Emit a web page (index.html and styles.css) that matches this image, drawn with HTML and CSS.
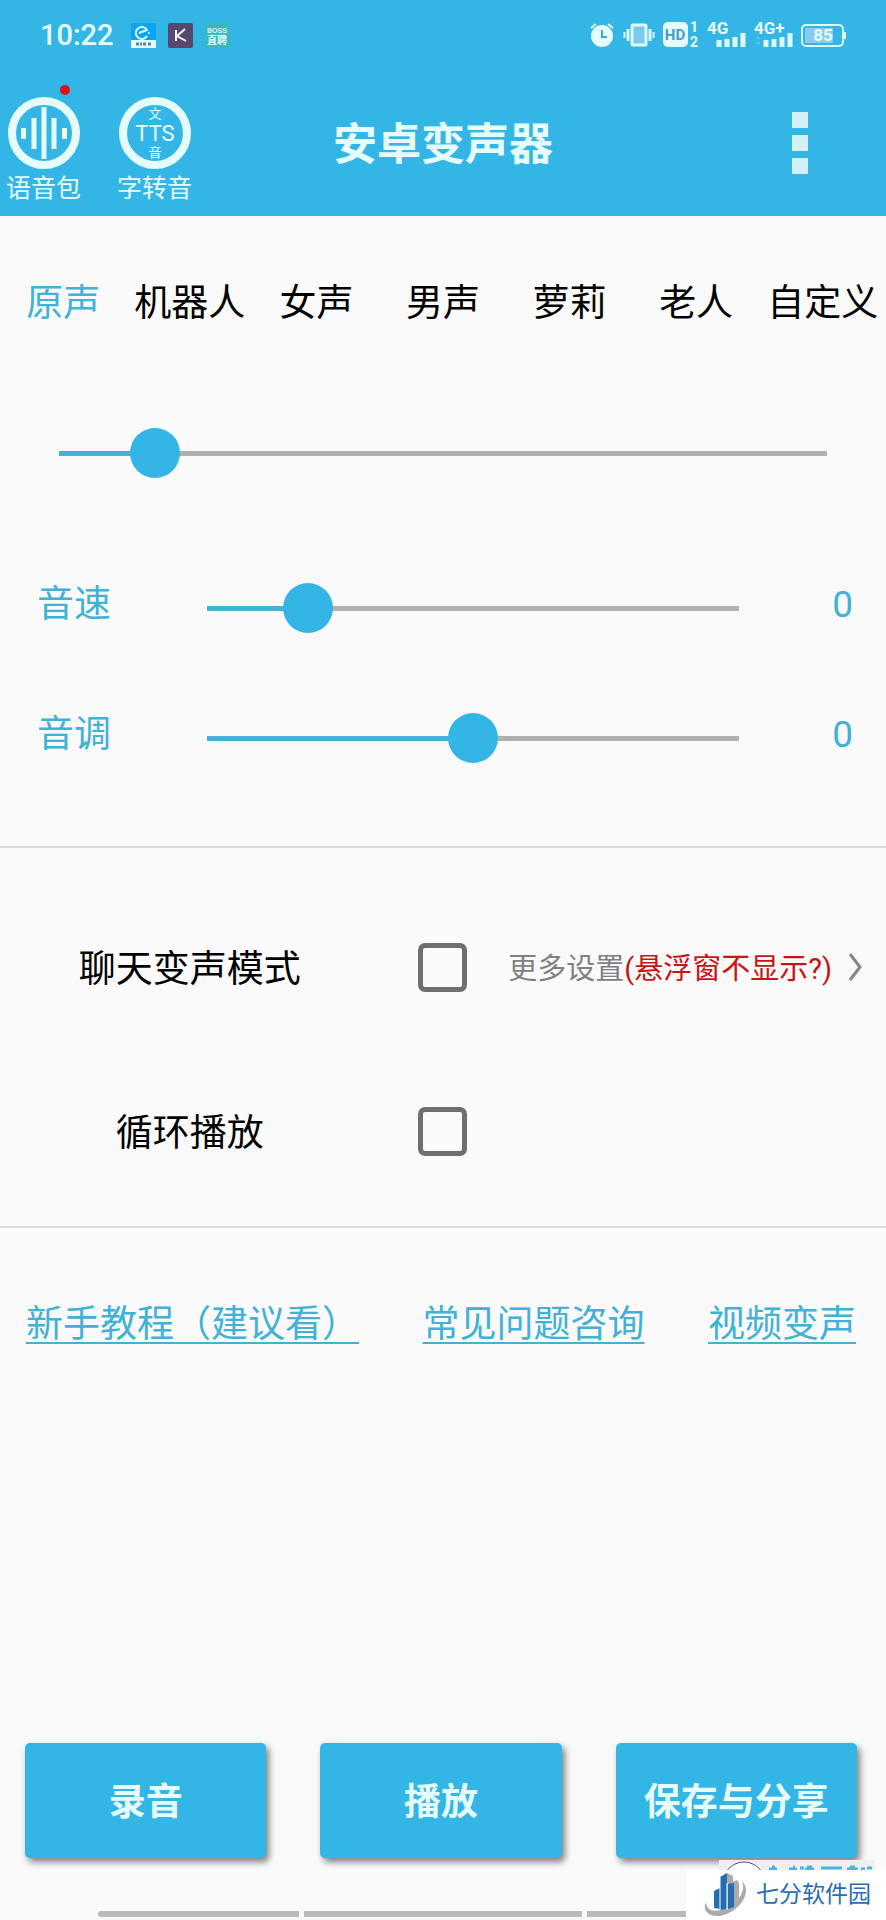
FILE: index.html
```html
<!DOCTYPE html>
<html lang="zh-CN">
<head>
    <meta charset="UTF-8">
    <title>安卓变声器</title>
    <meta name="viewport" content="width=device-width, initial-scale=1.0">
    <link rel="stylesheet" href="styles.css">
</head>
<body>
    <header class="header">
        <div class="status-bar">
            <span class="clock">10:22</span>
            <div class="status-apps">
                <svg width="25" height="25" viewBox="0 0 25 25">
                    <rect width="25" height="18" rx="2" fill="#08a5f5"/>
                    <rect y="17" width="25" height="8" rx="1" fill="#e4fbff"/>
                    <path d="M8 10 L16 7 A6 6 0 1 0 16 13" fill="none" stroke="#dcfbff" stroke-width="2"/>
                    <circle cx="18" cy="10" r="1" fill="#dcfbff"/>
                    <path d="M5 21h3M9 21h2M12 21h3M17 21h3" stroke="#57849a" stroke-width="3"/>
                </svg>
                <svg width="25" height="25" viewBox="0 0 25 25">
                    <rect width="25" height="25" rx="2" fill="#58486f"/>
                    <path d="M8 7v11M17 6L9 13l9 5" fill="none" stroke="#f3f6ff" stroke-width="2"/>
                </svg>
                <svg width="25" height="25" viewBox="0 0 25 25">
                    <rect width="25" height="25" rx="3" fill="#35b9bb"/>
                    <text x="12" y="10" class="boss-latin">BOSS</text>
                    <text x="12" y="21" class="boss-cjk">直聘</text>
                </svg>
            </div>
            <div class="status-icons">
                <!-- alarm -->
                <svg width="26" height="26" viewBox="0 0 26 26">
                    <circle cx="13" cy="14" r="11" fill="#e6fdff"/>
                    <path d="M2 6l5-4M19 2l5 4" stroke="#e6fdff" stroke-width="2"/>
                    <path d="M13 8v7h5" fill="none" stroke="#3fa9d4" stroke-width="2"/>
                </svg>
                <!-- vibrate -->
                <svg width="32" height="26" viewBox="0 0 32 26">
                    <rect x="9" y="3" width="14" height="20" rx="1" fill="#7cc9ee" stroke="#dcfbff" stroke-width="3"/>
                    <path d="M5 7v12M27 7v12" stroke="#dcfbff" stroke-width="3"/>
                    <path d="M1.500 10v6M30.500 10v6" stroke="#dcfbff" stroke-width="2"/>
                </svg>
                <!-- HD 1/2 -->
                <svg width="36" height="26" viewBox="0 0 36 26">
                    <rect width="25" height="25" rx="5" fill="#e6fdff"/>
                    <text x="12" y="18" class="hd-text">HD</text>
                    <text x="31" y="10" class="sim-text">1</text>
                    <text x="31" y="25" class="sim-text">2</text>
                </svg>
                <!-- signal 4G -->
                <svg width="39" height="26" viewBox="0 0 39 26">
                    <text x="0" y="12" class="net-text">4G</text>
                    <path d="M12 25v-7M20 25v-8M28 25v-10M36 25v-14" stroke="#dcfbff" stroke-width="5"/>
                </svg>
                <!-- signal 4G+ -->
                <svg width="39" height="26" viewBox="0 0 39 26">
                    <text x="0" y="12" class="net-text">4G+</text>
                    <path d="M1 17l3-3 3 3zM1 20l3 4 3-4z" fill="#58c4e6"/>
                    <path d="M12 25v-7M20 25v-8M28 25v-10M36 25v-14" stroke="#dcfbff" stroke-width="5"/>
                </svg>
                <!-- battery -->
                <svg width="45" height="26" viewBox="0 0 45 26">
                    <rect x="1" y="3" width="41" height="21" rx="4" fill="none" stroke="#dcfbff" stroke-width="2"/>
                    <rect x="4" y="6" width="28" height="15" rx="1" fill="#8ccbee"/>
                    <path d="M44 10v7" stroke="#dcfbff" stroke-width="2"/>
                    <text x="22" y="19" class="battery-text">85</text>
                </svg>
            </div>
        </div>

        <div class="toolbar">
            <div class="tools">
                <button type="button" class="tool">
                    <svg width="72" height="72" viewBox="0 0 72 72">
                        <circle cx="36" cy="36" r="32" fill="none" stroke="#e6fdff" stroke-width="8"/>
                        <path d="M15.500 31v11M56.500 31v11M26 21v31M46 21v31M36 10v52" stroke="#e6fdff" stroke-width="5"/>
                    </svg>
                    <span>语音包</span>
                    <i class="dot"></i>
                </button>
                <button type="button" class="tool">
                    <svg width="72" height="72" viewBox="0 0 72 72">
                        <circle cx="36" cy="36" r="32" fill="none" stroke="#e6fdff" stroke-width="8"/>
                        <text x="36" y="21" class="tts-small">文</text>
                        <text x="36" y="44" class="tts-big">TTS</text>
                        <text x="36" y="60" class="tts-small">音</text>
                    </svg>
                    <span>字转音</span>
                </button>
            </div>
            <h1 class="title">安卓变声器</h1>
            <button type="button" class="menu" aria-label="菜单">
                <i></i><i></i><i></i>
            </button>
        </div>
    </header>

    <main>
        <section class="section voice">
            <nav class="tabs">
                <button type="button" class="tab active">原声</button>
                <button type="button" class="tab">机器人</button>
                <button type="button" class="tab">女声</button>
                <button type="button" class="tab">男声</button>
                <button type="button" class="tab">萝莉</button>
                <button type="button" class="tab">老人</button>
                <button type="button" class="tab">自定义</button>
            </nav>
            <div class="progress-row">
                <input type="range" class="slider" min="0" max="1000" value="125" style="--fill: 12.5%" aria-label="进度">
            </div>
            <div class="tune-row">
                <label for="speed">音速</label>
                <input type="range" class="slider" id="speed" min="0" max="1000" value="189" style="--fill: 18.9%">
                <output for="speed">0</output>
            </div>
            <div class="tune-row">
                <label for="pitch">音调</label>
                <input type="range" class="slider" id="pitch" min="0" max="1000" value="500" style="--fill: 50%">
                <output for="pitch">0</output>
            </div>
        </section>

        <section class="section options">
            <div class="option-row">
                <label for="chatMode">聊天变声模式</label>
                <input type="checkbox" class="check" id="chatMode">
                <a href="#" class="more">
                    <span>更多设置<em>(悬浮窗不显示?)</em></span>
                    <svg width="14" height="30" viewBox="0 0 14 30">
                        <path d="M2 2l10 13L2 28" fill="none" stroke="#858585" stroke-width="3"/>
                    </svg>
                </a>
            </div>
            <div class="option-row">
                <label for="loop">循环播放</label>
                <input type="checkbox" class="check" id="loop">
            </div>
        </section>

        <div class="links">
            <a href="#">新手教程（建议看）</a>
            <a href="#">常见问题咨询</a>
            <a href="#">视频变声</a>
        </div>
    </main>

    <footer class="footer">
        <div class="actions">
            <button type="button">录音</button>
            <button type="button">播放</button>
            <button type="button">保存与分享</button>
        </div>
        <div class="nav-hint"><i></i><i></i><i></i></div>
    </footer>

    <div class="watermark">
        <svg class="watermark-top" width="156" height="10" viewBox="0 0 156 10">
            <rect width="156" height="10" fill="#efefef"/>
            <circle cx="25" cy="23" r="21" fill="#fff" stroke="#555" stroke-width="1"/>
            <path d="M50 9h8M53 7h3M70 9h8M74 7h2M81 8h4M86 9h9M88 7h5M102 8h21M128 9h11M131 7h5M142 9h4M148 8h5" stroke="#4cb4d8" stroke-width="3"/>
        </svg>
        <div class="watermark-box">
            <svg width="46" height="46" viewBox="0 0 46 46">
                <path d="M39 9C50 19 37 41 16 44 5 45-1 38 3 30c0 9 10 11 20 6C36 30 43 19 39 9z" fill="#a9abad"/>
                <path d="M24 1l6 3v29l-6 4z" fill="#a9abad"/>
                <path d="M29 10l5-2 2 3v20l-7 4z" fill="#a9abad"/>
                <path d="M11 19l6-3v21l-6-1zM17 5l7-4v36l-7 1zM25 12l6-1v24l-6 2z" fill="#246eb0"/>
                <path d="M17 5v33M24 11v27" stroke="#fff" stroke-width="1"/>
            </svg>
            <span>七分软件园</span>
        </div>
    </div>
</body>
</html>
```

FILE: styles.css
```css
* {
    box-sizing: border-box;
}
body {
    margin: 0;
    min-height: 100vh;
    display: flex;
    flex-direction: column;
    position: relative;
    background: #fafafa;
    color: #000;
    font-family: Roboto, "Noto Sans CJK SC", sans-serif;
    font-size: 37px;
    line-height: 50px;
}
button {
    font: inherit;
    color: inherit;
    background: none;
    border: none;
    padding: 0;
    cursor: pointer;
}
svg {
    display: block;
    flex: none;
}

/* header */
.header {
    background: #33b5e5;
    color: #e6fdff;
}
.status-bar {
    height: 70px;
    padding: 0 40px;
    display: flex;
    align-items: center;
}
.status-bar svg {
    overflow: visible;
}
.clock {
    font-size: 29px;
    font-weight: 500;
}
.status-apps {
    display: flex;
    gap: 12px;
    margin-left: 17px;
}
.status-icons {
    display: flex;
    gap: 8px;
    margin-left: auto;
}
.status-bar text {
    fill: #e6fdff;
    font-weight: 700;
}
.status-bar .boss-latin {
    font-size: 8px;
    font-weight: 500;
    text-anchor: middle;
}
.status-bar .boss-cjk {
    font-size: 10px;
    text-anchor: middle;
}
.status-bar .hd-text {
    font-size: 15px;
    fill: #3fa0c8;
    text-anchor: middle;
}
.status-bar .sim-text {
    font-size: 14px;
    text-anchor: middle;
}
.status-bar .net-text {
    font-size: 17px;
}
.status-bar .battery-text {
    font-size: 17px;
    text-anchor: middle;
}
.toolbar {
    height: 146px;
    display: grid;
    grid-template-columns: 1fr auto 1fr;
    align-items: center;
}
.tools {
    display: flex;
    gap: 36px;
    padding: 16px 0 0 6px;
}
.tool {
    position: relative;
    display: flex;
    flex-direction: column;
    align-items: center;
    gap: 4px;
    font-size: 25px;
    line-height: 32px;
}
.tool .dot {
    position: absolute;
    top: -12px;
    right: 11px;
    width: 10px;
    height: 10px;
    border-radius: 50%;
    background: #dc1018;
}
.tool text {
    fill: #e6fdff;
    text-anchor: middle;
}
.tts-small {
    font-size: 13px;
}
.tts-big {
    font-size: 22px;
}
.title {
    margin: 0;
    padding-top: 4px;
    font-size: 44px;
    font-weight: 700;
}
.menu {
    justify-self: end;
    display: flex;
    flex-direction: column;
    gap: 7px;
    padding: 10px;
    margin-right: 68px;
}
.menu i {
    width: 16px;
    height: 16px;
    background: #d3f1fb;
}

/* voice + sliders */
.section {
    border-bottom: 2px solid #dcdcdc;
}
.voice {
    padding-bottom: 43px;
}
.tabs {
    height: 170px;
    display: grid;
    grid-template-columns: repeat(7, 1fr);
}
.tab {
    padding-top: 6px;
    white-space: nowrap;
}
.tab.active {
    color: #41b1d6;
}
.progress-row {
    height: 134px;
    padding: 0 34px;
    margin-bottom: 23px;
    display: flex;
    align-items: center;
}
.tune-row {
    height: 130px;
    display: grid;
    grid-template-columns: 182px 1fr 122px;
    align-items: center;
    color: #41b1d6;
}
.tune-row label {
    padding: 0 0 6px 37px;
}
.tune-row output {
    padding: 0 33px 6px 0;
    text-align: right;
}
.slider {
    -webkit-appearance: none;
    appearance: none;
    width: 100%;
    height: 50px;
    margin: 0;
    background: none;
}
/* the line stops half a thumb short of both ends */
.slider::-webkit-slider-runnable-track {
    height: 50px;
    background: linear-gradient(to right, #47b0d6 var(--fill), #b0b0b0 var(--fill)) center / calc(100% - 50px) 5px no-repeat;
}
.slider::-webkit-slider-thumb {
    -webkit-appearance: none;
    width: 50px;
    height: 50px;
    border-radius: 50%;
    background: #33b5e5;
}

/* options */
.options {
    padding: 37px 0 13px;
}
.option-row {
    height: 164px;
    display: grid;
    grid-template-columns: 3fr 1fr 3fr;
    align-items: center;
}
.option-row label {
    padding-top: 6px;
    text-align: center;
}
.check {
    -webkit-appearance: none;
    appearance: none;
    justify-self: center;
    width: 49px;
    height: 49px;
    margin: 0;
    border: 5px solid #6f6f6f;
    border-radius: 7px;
}
.check:checked {
    background: #33b5e5;
}
.more {
    display: flex;
    align-items: center;
    gap: 16px;
    padding-left: 2px;
    font-size: 29px;
    color: #808080;
    text-decoration: none;
    white-space: nowrap;
}
.more span {
    padding-top: 4px;
}
.more em {
    font-style: normal;
    color: #c81414;
}

.links {
    display: flex;
    justify-content: space-between;
    padding: 72px 30px 0 26px;
}
.links a {
    color: #41b1d6;
    text-decoration-thickness: 2px;
    text-underline-offset: 5px;
}

/* bottom */
.footer {
    margin-top: auto;
    padding-bottom: 3px;
}
.actions {
    display: grid;
    grid-template-columns: repeat(3, 1fr);
    gap: 54px;
    padding: 0 29px 53px 25px;
}
.actions button {
    height: 115px;
    padding-top: 4px;
    border-radius: 5px;
    background: #33b5e5;
    color: #e6fdff;
    font-weight: 700;
    box-shadow: 3px 4px 7px rgba(0,0,0,0.5);
}
.nav-hint {
    display: grid;
    grid-template-columns: 201px 278px 201px;
    justify-content: center;
    gap: 5px;
}
.nav-hint i {
    height: 6px;
    background: #bababa;
}
.nav-hint i:first-child {
    border-radius: 3px 0 0 3px;
}
.nav-hint i:last-child {
    border-radius: 0 3px 3px 0;
}

.watermark {
    position: absolute;
    right: 0;
    bottom: 0;
    width: 200px;
}
.watermark-top {
    margin-left: 33px;
}
.watermark-box {
    height: 50px;
    padding-left: 17px;
    display: flex;
    align-items: center;
    gap: 7px;
    background: #fff;
    color: #2a6caf;
    font-size: 23px;
    white-space: nowrap;
}
```
